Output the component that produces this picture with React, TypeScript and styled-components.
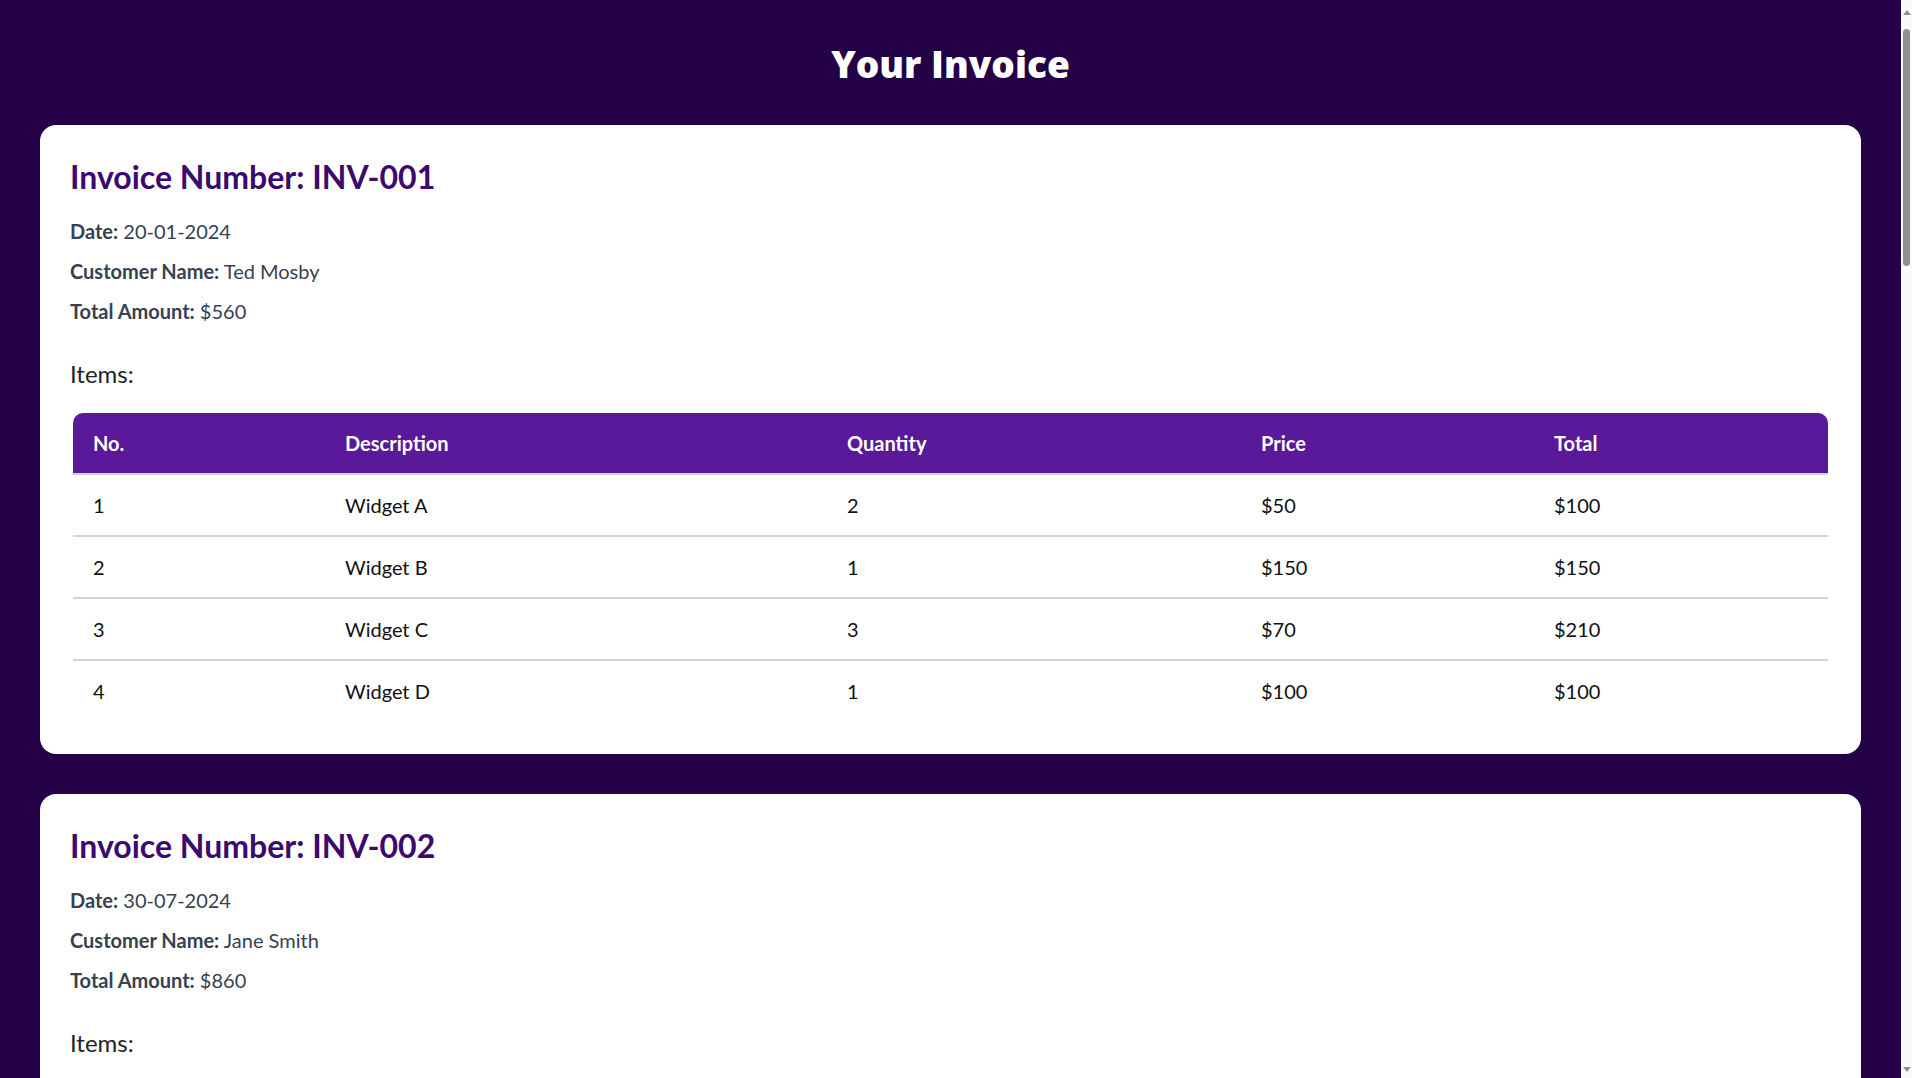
import * as React from 'react';
import styled, { createGlobalStyle } from 'styled-components';

type Item = { desc: string; qty: number; price: number };
type Invoice = { no: string; date: string; customer: string; items: Item[] };

const invoices: Invoice[] = [
    {
        no: 'INV-001', date: '20-01-2024', customer: 'Ted Mosby',
        items: [
            { desc: 'Widget A', qty: 2, price: 50 },
            { desc: 'Widget B', qty: 1, price: 150 },
            { desc: 'Widget C', qty: 3, price: 70 },
            { desc: 'Widget D', qty: 1, price: 100 },
        ],
    },
    {
        no: 'INV-002', date: '30-07-2024', customer: 'Jane Smith',
        items: [
            { desc: 'Widget E', qty: 2, price: 200 },
            { desc: 'Widget F', qty: 3, price: 120 },
            { desc: 'Widget G', qty: 1, price: 100 },
        ],
    },
    {
        no: 'INV-003', date: '12-03-2024', customer: 'Marshall Eriksen',
        items: [
            { desc: 'Widget A', qty: 4, price: 50 },
            { desc: 'Widget C', qty: 2, price: 70 },
            { desc: 'Widget D', qty: 1, price: 100 },
        ],
    },
    {
        no: 'INV-004', date: '05-05-2024', customer: 'Lily Aldrin',
        items: [
            { desc: 'Widget B', qty: 2, price: 150 },
            { desc: 'Widget E', qty: 1, price: 200 },
            { desc: 'Widget G', qty: 3, price: 100 },
        ],
    },
    {
        no: 'INV-005', date: '18-06-2024', customer: 'Robin Scherbatsky',
        items: [
            { desc: 'Widget A', qty: 1, price: 50 },
            { desc: 'Widget F', qty: 2, price: 120 },
            { desc: 'Widget D', qty: 2, price: 100 },
        ],
    },
    {
        no: 'INV-006', date: '09-09-2024', customer: 'Barney Stinson',
        items: [
            { desc: 'Widget C', qty: 5, price: 70 },
            { desc: 'Widget B', qty: 1, price: 150 },
            { desc: 'Widget E', qty: 1, price: 200 },
        ],
    },
    {
        no: 'INV-007', date: '21-11-2024', customer: 'Tracy McConnell',
        items: [
            { desc: 'Widget G', qty: 2, price: 100 },
            { desc: 'Widget A', qty: 3, price: 50 },
            { desc: 'Widget F', qty: 1, price: 120 },
        ],
    },
];

const total = (items: Item[]) => items.reduce((s, i) => s + i.qty * i.price, 0);

export default function App() {
    return (
        <>
            <GlobalStyle />
            <Page>
                <Title>Your Invoice</Title>
                {invoices.map((inv) => (
                    <Card key={inv.no}>
                        <InvoiceNo>Invoice Number: {inv.no}</InvoiceNo>
                        <Detail><b>Date:</b> {inv.date}</Detail>
                        <Detail><b>Customer Name:</b> {inv.customer}</Detail>
                        <Detail><b>Total Amount:</b> ${total(inv.items)}</Detail>
                        <ItemsTitle>Items:</ItemsTitle>
                        <Table>
                            <colgroup>
                                <col style={{ width: 252 }} />
                                <col style={{ width: 502 }} />
                                <col style={{ width: 414 }} />
                                <col style={{ width: 293 }} />
                                <col />
                            </colgroup>
                            <thead>
                                <tr>
                                    <Th>No.</Th>
                                    <Th>Description</Th>
                                    <Th>Quantity</Th>
                                    <Th>Price</Th>
                                    <Th>Total</Th>
                                </tr>
                            </thead>
                            <tbody>
                                {inv.items.map((it, i) => (
                                    <Row key={i}>
                                        <Td>{i + 1}</Td>
                                        <Td>{it.desc}</Td>
                                        <Td>{it.qty}</Td>
                                        <Td>${it.price}</Td>
                                        <Td>${it.qty * it.price}</Td>
                                    </Row>
                                ))}
                            </tbody>
                        </Table>
                    </Card>
                ))}
            </Page>
            {/* the browser's scrollbar, as it shows in the screenshot */}
            <ScrollTrack>
                <ScrollArrow />
                <ScrollThumb />
                <ScrollArrow down />
            </ScrollTrack>
        </>
    );
}

const GlobalStyle = createGlobalStyle`
    html, body {
        margin: 0;
        padding: 0;
        background: #240046;
        font-family: Lato, "Noto Sans", sans-serif;
    }
    ::-webkit-scrollbar {
        display: none;
    }
`

const Page = styled.div`
    padding: 40px 51px 40px 40px;
`
const Title = styled.h1`
    margin: 0 0 37px;
    text-align: center;
    color: #fff;
    font-family: "Open Sans", Lato, sans-serif;
    font-size: 37px;
    line-height: 48px;
    font-weight: 800;
`
const Card = styled.div`
    background: #fff;
    border-radius: 16px;
    padding: 30px 30px 33px;
    margin-bottom: 40px;
`
const InvoiceNo = styled.h2`
    margin: 2px 0 21px;
    color: #3c096c;
    font-size: 32px;
    line-height: 40px;
    font-weight: 700;
`
const Detail = styled.p`
    margin: 0 0 14px;
    font-size: 20px;
    line-height: 26px;
    color: #374151;
    b {
        font-weight: 700;
    }
`
const ItemsTitle = styled.h3`
    margin: 35px 0 24px;
    font-size: 24px;
    line-height: 30px;
    font-weight: 400;
    color: #1f2328;
`
const Table = styled.table`
    width: calc(100% - 6px);
    margin: 0 3px;
    table-layout: fixed;
    border-collapse: separate;
    border-spacing: 0;
    font-size: 20px;
    line-height: 26px;
`
const Th = styled.th`
    background: #5a189a;
    color: #fff;
    font-weight: 700;
    text-align: left;
    padding: 17px 20px;
    border-bottom: 2px solid #d1d5db;
    &:first-child {
        border-top-left-radius: 10px;
    }
    &:last-child {
        border-top-right-radius: 10px;
    }
`
const Row = styled.tr`
    &:last-child td {
        border-bottom: none;
    }
`
const Td = styled.td`
    padding: 17px 20px;
    color: #111;
    border-bottom: 2px solid #d1d5db;
`
const ScrollTrack = styled.div`
    position: fixed;
    top: 0;
    right: 0;
    bottom: 0;
    width: 11px;
    background: #fafafa;
    display: flex;
    flex-direction: column;
    align-items: center;
    padding: 10px 0 6px;
    box-sizing: border-box;
`
const ScrollArrow = styled.div<{ down?: boolean }>`
    width: 0;
    height: 0;
    border-left: 4px solid transparent;
    border-right: 4px solid transparent;
    ${(p) => (p.down ? 'border-top: 5px solid #8f8f8f; margin-top: auto;' : 'border-bottom: 5px solid #8f8f8f;')}
`
const ScrollThumb = styled.div`
    margin-top: 14px;
    width: 7px;
    height: 237px;
    border-radius: 4px;
    background: #8f8f8f;
`
